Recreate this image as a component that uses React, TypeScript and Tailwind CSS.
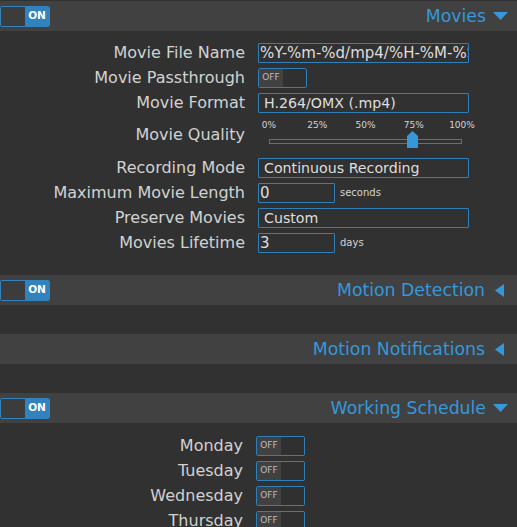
import React from "react";

const FONT = { fontFamily: '"DejaVu Sans", "Liberation Sans", sans-serif' };

function OnToggle() {
  return (
    <div className="flex h-[21px] w-[50px] overflow-hidden rounded-[2px] border border-[#3182bd]">
      <div className="w-[24px] bg-[#3c3c3c]" />
      <div className="flex flex-1 items-center justify-center bg-[#3182bd] text-[10.5px] font-bold text-white">
        ON
      </div>
    </div>
  );
}

function OffToggle() {
  return (
    <div className="flex h-[20px] w-[49px] overflow-hidden rounded-[2px] border border-[#2f80b8]">
      <div className="flex w-[24px] items-center justify-center bg-[#414141] text-[9px] text-[#bdbdbd]">
        OFF
      </div>
      <div className="flex-1 bg-[#303030]" />
    </div>
  );
}

function Header({ title, open, toggle }: { title: string; open: boolean; toggle: boolean }) {
  return (
    <div className="flex h-[30px] items-center justify-between bg-[#414141]">
      <div>{toggle && <OnToggle />}</div>
      {open ? (
        <div className="flex items-center gap-[7px] pr-[9px] text-[17.3px] text-[#3498db]">
          <span className="leading-[20px]">{title}</span>
          <svg width="15" height="8" viewBox="0 0 15 8">
            <polygon points="0,0 15,0 7.5,8" fill="#3498db" />
          </svg>
        </div>
      ) : (
        <div className="flex items-center gap-[10px] pr-[13px] text-[17.3px] text-[#3498db]">
          <span className="leading-[20px]">{title}</span>
          <svg width="9" height="13" viewBox="0 0 9 13">
            <polygon points="9,0 9,13 0,6.5" fill="#3498db" />
          </svg>
        </div>
      )}
    </div>
  );
}

function Label({ children }: { children: React.ReactNode }) {
  return <div className="text-right text-[16px] leading-[20px] text-[#d2d2d2]">{children}</div>;
}

function Select({ value }: { value: string }) {
  return (
    <div className="h-[20px] w-[211px] overflow-hidden whitespace-nowrap rounded-[1px] border border-[#2f80b8] pl-[5px] text-[14.2px] leading-[18px] text-[#dedede]">
      {value}
    </div>
  );
}

function TextInput({ value, wide }: { value: string; wide?: boolean }) {
  return (
    <div
      className={
        wide
          ? "h-[20px] w-[211px] overflow-hidden whitespace-nowrap rounded-[1px] border border-[#2f80b8] pl-[1px] text-[15px] leading-[18px] text-[#dedede]"
          : "h-[20px] w-[77px] overflow-hidden whitespace-nowrap rounded-[1px] border border-[#2f80b8] pl-[1px] text-[15px] leading-[18px] text-[#dedede]"
      }
    >
      {value}
    </div>
  );
}

function Row({ label, children }: { label: string; children: React.ReactNode }) {
  return (
    <div className="grid h-[25px] grid-cols-[245px_1fr] items-center gap-x-[13px]">
      <Label>{label}</Label>
      <div className="flex items-center">{children}</div>
    </div>
  );
}

function QualitySlider() {
  const ticks = ["0%", "25%", "50%", "75%", "100%"];
  return (
    <div className="flex flex-col self-start pt-[4px]">
      <div className="ml-[-4px] flex h-[12px] w-[223px] justify-between text-[9px] leading-[12px] text-[#d4d4d4]">
        {ticks.map((t) => (
          <div key={t} className="w-[30px] text-center">
            {t}
          </div>
        ))}
      </div>
      <div className="relative ml-[11px] h-[17px] w-[193px]">
        <div className="mt-[8px] h-[5px] w-[193px] border border-[#2f80b8]" />
        <svg
          className="absolute left-[138px] top-0"
          width="11"
          height="17"
          viewBox="0 0 11 17"
        >
          <polygon points="0,5 5.5,0 11,5 11,17 0,17" fill="#3498db" />
        </svg>
      </div>
    </div>
  );
}

export default function App() {
  return (
    <div className="min-h-screen bg-[#313131] pt-[1px]" style={FONT}>
      <Header title="Movies" open toggle />
      <div className="flex flex-col pb-[20px] pt-[9px]">
        <Row label="Movie File Name">
          <TextInput value="%Y-%m-%d/mp4/%H-%M-%S" wide />
        </Row>
        <Row label="Movie Passthrough">
          <OffToggle />
        </Row>
        <Row label="Movie Format">
          <Select value="H.264/OMX (.mp4)" />
        </Row>
        <div className="grid h-[40px] grid-cols-[245px_1fr] items-center gap-x-[13px]">
          <Label>Movie Quality</Label>
          <QualitySlider />
        </div>
        <Row label="Recording Mode">
          <Select value="Continuous Recording" />
        </Row>
        <Row label="Maximum Movie Length">
          <TextInput value="0" />
          <span className="ml-[5px] text-[10px] text-[#d4d4d4]">seconds</span>
        </Row>
        <Row label="Preserve Movies">
          <Select value="Custom" />
        </Row>
        <Row label="Movies Lifetime">
          <TextInput value="3" />
          <span className="ml-[5px] text-[10px] text-[#d4d4d4]">days</span>
        </Row>
      </div>
      <Header title="Motion Detection" open={false} toggle />
      <div className="h-[29px]" />
      <Header title="Motion Notifications" open={false} toggle={false} />
      <div className="h-[29px]" />
      <Header title="Working Schedule" open toggle />
      <div className="flex flex-col pt-[10px]">
        {["Monday", "Tuesday", "Wednesday", "Thursday"].map((d) => (
          <div key={d} className="grid h-[25px] grid-cols-[243px_1fr] items-center gap-x-[13px]">
            <Label>{d}</Label>
            <div className="flex items-center">
              <OffToggle />
            </div>
          </div>
        ))}
      </div>
    </div>
  );
}
